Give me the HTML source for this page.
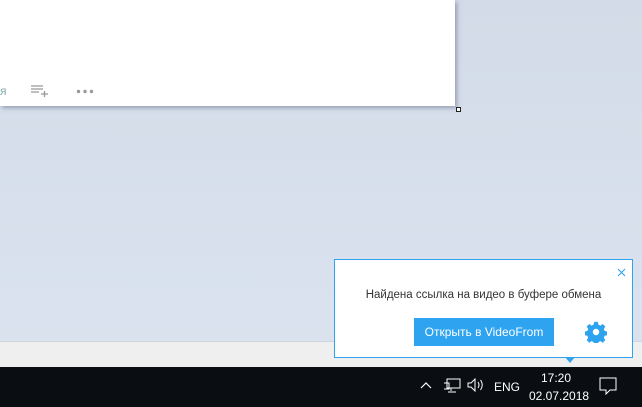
<!DOCTYPE html><html><head><style>
body{margin:0;width:642px;height:407px;overflow:hidden;background:linear-gradient(#d3dbe8,#dbe4f0);position:relative;font-family:"Liberation Sans","Noto Sans CJK SC",sans-serif}
.win{position:absolute;left:0;top:0;width:455px;height:106px;background:#fff;box-shadow:2px 2px 4px rgba(90,100,130,.5)}
.bar{position:absolute;left:0;top:341px;width:642px;height:26px;background:#efefef;border-top:1px solid #cfd6e0}
.tb{position:absolute;left:0;top:367px;width:642px;height:40px;background:#0a0d11;color:#fff;font-size:12px}
.pop{position:absolute;left:334px;top:259px;width:297px;height:97px;background:#fff;border:1px solid #2ea3ef}
.btn{position:absolute;left:79px;top:58px;width:140px;height:28px;background:#2ea3ef;color:#fff;font-size:12px;line-height:28px;text-align:center}
</style></head><body>
<div class="win">
<div style="position:absolute;left:0;top:84px;font-size:12px;color:#8aa;">я</div>
<svg style="position:absolute;left:30px;top:85px" width="20" height="12"><path d="M1 1h12M1 4h12M1 7h8M11 9h7M14.5 6v7" stroke="#999" stroke-width="1.3" fill="none"/></svg>
<svg style="position:absolute;left:76px;top:89px" width="20" height="5"><circle cx="2.5" cy="2.5" r="1.7" fill="#999"/><circle cx="9" cy="2.5" r="1.7" fill="#999"/><circle cx="15.5" cy="2.5" r="1.7" fill="#999"/></svg>
</div>
<div style="position:absolute;left:456px;top:107px;width:3px;height:3px;border:1px solid #222;background:#fff"></div>
<div class="bar"></div>
<div class="tb">
<svg style="position:absolute;left:420px;top:14px" width="12" height="8"><path d="M1 7l5-5 5 5" stroke="#fff" fill="none" stroke-width="1.2"/></svg>
<svg style="position:absolute;left:443px;top:11px" width="18" height="16"><path d="M4 1h13v9H4zM1 5h5v6H1M8 10v3M5 14h8" stroke="#fff" fill="none"/></svg>
<svg style="position:absolute;left:467px;top:11px" width="18" height="14"><path d="M1 5h3l4-4v12l-4-4H1zM11 4q2 3 0 6M13.5 2q3.5 5 0 10" stroke="#fff" fill="none"/></svg>
<div style="position:absolute;left:494px;top:13px">ENG</div>
<div style="position:absolute;left:541px;top:4px">17:20</div>
<div style="position:absolute;left:529px;top:22px">02.07.2018</div>
<svg style="position:absolute;left:599px;top:10px" width="18" height="18"><path d="M1 1h16v12h-6l-4 4v-4H1z" stroke="#fff" fill="none"/></svg>
</div>
<div class="pop">
<svg style="position:absolute;left:282px;top:8px" width="9" height="9"><path d="M1 1l7 7M8 1l-7 7" stroke="#2ea3ef" stroke-width="1.1"/></svg>
<div style="position:absolute;left:0;width:297px;top:29px;text-align:center;font-size:11.5px;color:#333">Найдена ссылка на видео в буфере обмена</div>
<div class="btn">Открыть в VideoFrom</div>
<svg style="position:absolute;left:250px;top:61px" width="22" height="22" viewBox="0 0 24 24"><path fill="#2ea3ef" d="M10 1h4l.6 3 2.2 1 2.6-1.7 2.8 2.8-1.7 2.6 1 2.2 3 .6v4l-3 .6-1 2.2 1.7 2.6-2.8 2.8-2.6-1.7-2.2 1-.6 3h-4l-.6-3-2.2-1-2.6 1.7-2.8-2.8 1.7-2.6-1-2.2-3-.6v-4l3-.6 1-2.2-1.7-2.6 2.8-2.8 2.6 1.7 2.2-1zM12 8.5a3.5 3.5 0 100 7 3.5 3.5 0 000-7z"/></svg>
</div>
<div style="position:absolute;left:565px;top:357px;width:0;height:0;border:5px solid transparent;border-top:6px solid #2ea3ef"></div>
</body></html>
